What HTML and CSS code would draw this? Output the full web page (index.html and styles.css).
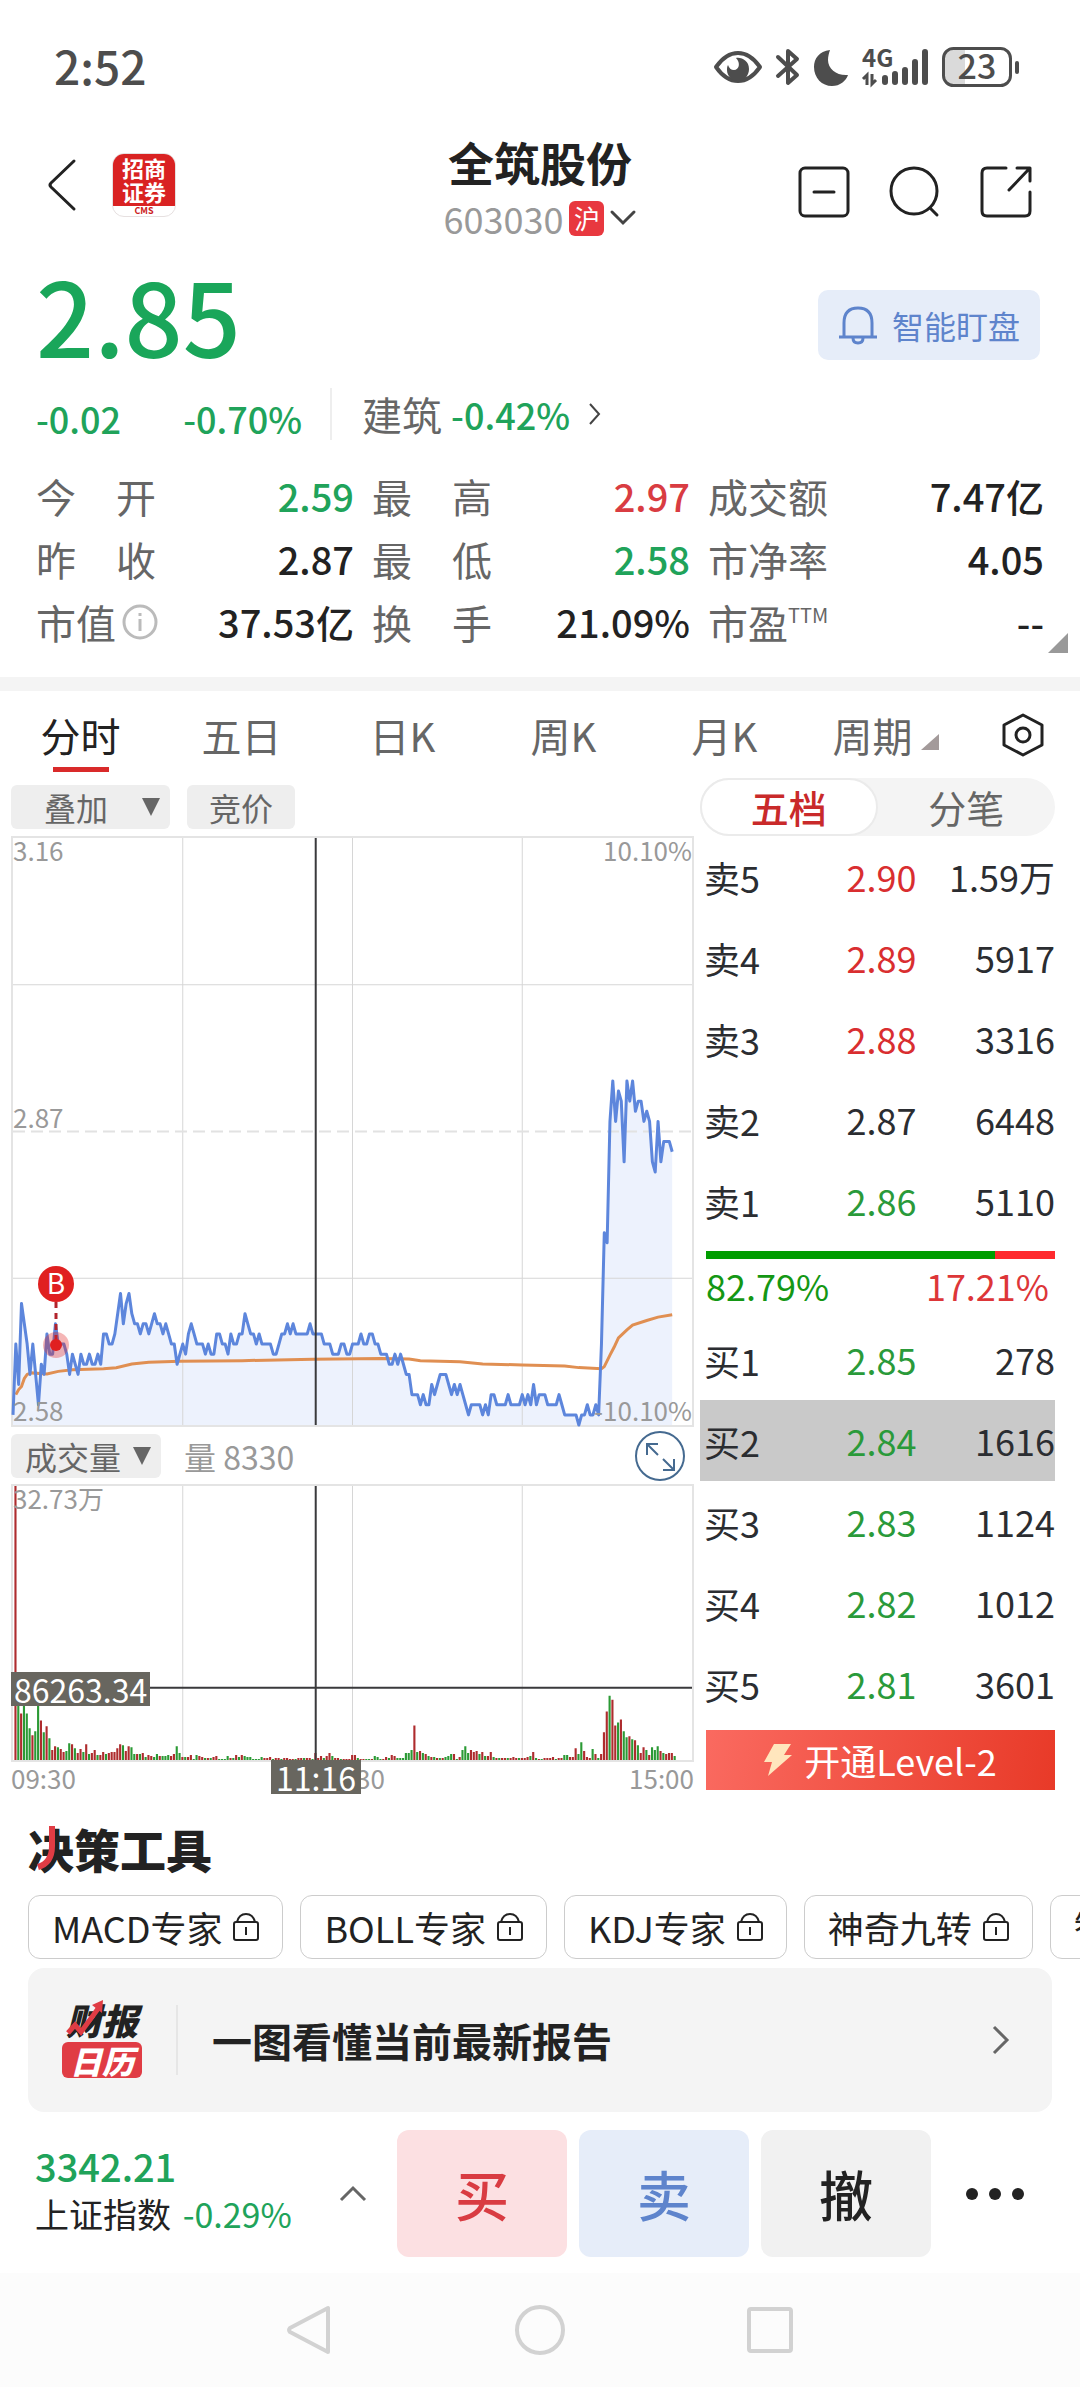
FILE: index.html
```html
<!DOCTYPE html>
<html lang="zh-CN">
<head>
<meta charset="utf-8">
<meta name="viewport" content="width=device-width, initial-scale=1">
<title>全筑股份 603030</title>
<link rel="stylesheet" href="styles.css">
</head>
<body>
<div class="statusbar">
  <span class="clock">2:52</span>
  <div class="status-icons">
    <svg width="48" height="34" viewBox="0 0 48 34"><path d="M2 17C9 7 16 3 24 3s15 4 22 14C39 27 32 31 24 31S9 27 2 17z" fill="none" stroke="#4d4d4d" stroke-width="4" stroke-linejoin="round"/><path d="M22 8c6-1 13 3 13 11 0 7-5 12-11 12s-11-5-11-11c0-2 0-3 1-5 1 3 3 5 6 5 5 0 7-7 2-12z" fill="#4d4d4d"/></svg>
    <svg class="bt" width="24" height="38" viewBox="0 0 24 38"><path d="M2 9l19 18-9 8V3l9 8L2 28" fill="none" stroke="#4d4d4d" stroke-width="4" stroke-linecap="round" stroke-linejoin="round"/></svg>
    <svg class="moon" width="34" height="37" viewBox="0 0 34 37"><path d="M16 1C5 2 0 10 0 18c0 11 8 19 18 19 8 0 14-5 16-11-11 1-20-6-20-15 0-4 1-7 2-10z" fill="#4d4d4d"/></svg>
    <svg class="signal" width="66" height="38" viewBox="0 0 66 38"><text x="0" y="19" class="net">4G</text><g stroke="#4d4d4d" stroke-width="3" fill="none"><path d="M5 37V27l-4 4M10 26v10l4-4"/></g><g stroke="#4d4d4d" stroke-width="6" stroke-linecap="round"><path d="M23 30v4M33 26v8M43 22v12M53 14v20M63 4v30"/></g></svg>
    <svg class="battery" width="78" height="40" viewBox="0 0 78 40"><path d="M12 3h11v34H12q-9 0-9-9V12q0-9 9-9z" fill="#dadada"/><rect x="1.5" y="1.5" width="67" height="37" rx="10" fill="none" stroke="#4d4d4d" stroke-width="3"/><path d="M75 16v9" stroke="#4d4d4d" stroke-width="4" stroke-linecap="round"/><text x="35" y="32" text-anchor="middle" class="pct">23</text></svg>
  </div>
</div>

<header class="topbar">
  <div class="top-left">
    <button class="icon-btn" aria-label="返回"><svg width="28" height="52" viewBox="0 0 28 52"><path d="M26 2L3 24q-2 2 0 4l23 22" fill="none" stroke="#222" stroke-width="3" stroke-linecap="round"/></svg></button>
    <div class="broker"><span class="broker-name">招商<br>证券</span><span class="broker-en">CMS</span></div>
  </div>
  <div class="top-mid">
    <h1>全筑股份</h1>
    <div class="code"><span>603030</span><span class="market">沪</span><svg width="26" height="16" viewBox="0 0 26 16"><path d="M2 2l11 11L24 2" fill="none" stroke="#444" stroke-width="3" stroke-linecap="round"/></svg></div>
  </div>
  <div class="top-right">
    <button class="icon-btn" aria-label="移除自选"><svg width="52" height="52" viewBox="0 0 52 52" fill="none" stroke="#222" stroke-width="3"><rect x="2" y="2" width="48" height="48" rx="5"/><path d="M16 26h20" stroke-linecap="round"/></svg></button>
    <button class="icon-btn" aria-label="搜索"><svg width="52" height="52" viewBox="0 0 52 52" fill="none" stroke="#222" stroke-width="3" stroke-linecap="round"><circle cx="25" cy="25" r="23"/><path d="M41 42l7 7"/></svg></button>
    <button class="icon-btn" aria-label="分享"><svg width="52" height="52" viewBox="0 0 52 52" fill="none" stroke="#222" stroke-width="3" stroke-linecap="round" stroke-linejoin="round"><path d="M26 2H7q-5 0-5 5v38q0 5 5 5h38q5 0 5-5V26M37 2h13v13M49 3L29 24"/></svg></button>
  </div>
</header>

<section class="quote">
  <div class="price-row">
    <strong class="price">2.85</strong>
    <button class="watch"><svg width="40" height="40" viewBox="0 0 40 40" fill="none" stroke="#5e84cc" stroke-width="3"><path d="M6 32V18Q6 3 20 3t14 15v14M1 32h38"/><path d="M15 33q0 5 5 5t5-5"/></svg>智能盯盘</button>
  </div>
  <div class="change-row">
    <div class="changes"><span>-0.02</span><span>-0.70%</span></div>
    <a class="sector" href="#sector">建筑 <b>-0.42%</b><svg width="14" height="24" viewBox="0 0 14 24"><path d="M2 2l9 10-9 10" fill="none" stroke="#444" stroke-width="2"/></svg></a>
  </div>
  <dl class="stats">
    <div><dt>今　开</dt><dd class="down">2.59</dd></div>
    <div><dt>最　高</dt><dd class="up">2.97</dd></div>
    <div><dt>成交额</dt><dd>7.47亿</dd></div>
    <div><dt>昨　收</dt><dd>2.87</dd></div>
    <div><dt>最　低</dt><dd class="down">2.58</dd></div>
    <div><dt>市净率</dt><dd>4.05</dd></div>
    <div><dt>市值<svg class="info" width="38" height="38" viewBox="0 0 38 38"><circle cx="19" cy="19" r="16" fill="none" stroke="#bbb" stroke-width="3"/><path d="M19 16v12M19 10v3" stroke="#bbb" stroke-width="3"/></svg></dt><dd>37.53亿</dd></div>
    <div><dt>换　手</dt><dd>21.09%</dd></div>
    <div><dt>市盈<sup>TTM</sup></dt><dd>--</dd></div>
  </dl>
  <svg class="corner" width="20" height="20" viewBox="0 0 20 20"><path d="M20 0v20H0z" fill="#999"/></svg>
</section>

<nav class="tabs">
  <button class="tab active">分时</button>
  <button class="tab">五日</button>
  <button class="tab">日K</button>
  <button class="tab">周K</button>
  <button class="tab">月K</button>
  <button class="tab">周期<svg width="18" height="16" viewBox="0 0 18 16"><path d="M18 0v16H0z" fill="#a39a9a"/></svg></button>
  <button class="tab tab-set" aria-label="设置"><svg width="42" height="44" viewBox="0 0 42 44" fill="none" stroke="#222" stroke-width="3" stroke-linejoin="round"><path d="M21 2l19 10v20L21 42 2 32V12z"/><circle cx="21" cy="22" r="7"/></svg></button>
</nav>

<main class="board">
  <div class="charts">
    <div class="chips">
      <button class="chip chip-overlay">叠加<i class="tri"></i></button>
      <button class="chip">竞价</button>
    </div>
    <div class="plot price-plot">
      <svg class="plot-svg" viewBox="0 0 240 58" preserveAspectRatio="none">
        <path id="area" class="area"/>
        <g class="grid"><path d="M60 0v58M120 0v58M180 0v58M0 14.5h240M0 43.5h240"/></g>
        <path class="mid" d="M0 29h240"/>
        <path id="avg" class="avg"/>
        <path id="line" class="line"/>
        <path class="cross" d="M107 0v58"/>
      </svg>
      <span class="lab top-l">3.16</span><span class="lab top-r">10.10%</span>
      <span class="lab mid-l">2.87</span>
      <span class="lab bot-l">2.58</span><span class="lab bot-r">-10.10%</span>
      <svg class="buy-mark" width="40" height="98" viewBox="0 0 40 98"><path d="M20 36v42" stroke="#b3242c" stroke-width="3" stroke-dasharray="6 5"/><circle cx="20" cy="79" r="13" fill="#e02020" opacity=".33"/><circle cx="20" cy="79" r="6" fill="#e02020"/><circle cx="20" cy="18" r="18" fill="#e02020"/><text x="20" y="28" text-anchor="middle" class="mark-b">B</text></svg>
    </div>
    <div class="vol-bar">
      <button class="chip">成交量<i class="tri"></i></button>
      <span class="vol-now">量 8330</span>
      <button class="icon-btn expand" aria-label="全屏"><svg width="50" height="50" viewBox="0 0 50 50" fill="none" stroke="#456a90" stroke-width="2"><circle cx="25" cy="25" r="24"/><path d="M23 24L12 13M12 24V13h11M28 28l11 11M39 28v11H28"/></svg></button>
    </div>
    <div class="plot vol-plot">
      <svg class="plot-svg" viewBox="0 0 240 277" preserveAspectRatio="none">
        <g class="grid"><path d="M60 0v277M120 0v277M180 0v277"/></g>
        <path id="vol-up" class="vol-up"/><path id="vol-down" class="vol-down"/>
        <path class="cross" d="M107 0v277M0 204h240"/>
      </svg>
      <span class="lab top-l">32.73万</span>
      <span class="tag tag-vol">86263.34</span>
    </div>
    <div class="axis"><span>09:30</span><span>11:30</span><span>15:00</span><span class="tag tag-time">11:16</span></div>
  </div>

  <div class="depth">
    <div class="segment"><button class="seg on">五档</button><button class="seg">分笔</button></div>
    <table class="book">
      <tr><th>卖5</th><td class="up">2.90</td><td>1.59万</td></tr>
      <tr><th>卖4</th><td class="up">2.89</td><td>5917</td></tr>
      <tr><th>卖3</th><td class="up">2.88</td><td>3316</td></tr>
      <tr><th>卖2</th><td>2.87</td><td>6448</td></tr>
      <tr><th>卖1</th><td class="down">2.86</td><td>5110</td></tr>
    </table>
    <div class="ratio">
      <div class="ratio-bar"><i style="width:82.79%"></i></div>
      <div class="ratio-text"><span class="g">82.79%</span><span class="r">17.21%</span></div>
    </div>
    <table class="book">
      <tr><th>买1</th><td class="down">2.85</td><td>278</td></tr>
      <tr class="picked"><th>买2</th><td class="down">2.84</td><td>1616</td></tr>
      <tr><th>买3</th><td class="down">2.83</td><td>1124</td></tr>
      <tr><th>买4</th><td class="down">2.82</td><td>1012</td></tr>
      <tr><th>买5</th><td class="down">2.81</td><td>3601</td></tr>
    </table>
    <button class="level2"><svg width="28" height="32" viewBox="0 0 28 32"><path d="M10 0h17l-7 11h8L4 32l4-14H0z" fill="#ffe6bd"/></svg>开通Level-2</button>
  </div>
</main>

<section class="tools">
  <h2>决策工具<svg class="stroke" width="18" height="44" viewBox="0 0 18 44"><path d="M15 0v20Q15 37 1 41" fill="none" stroke="#e03c44" stroke-width="6"/></svg></h2>
  <div class="tool-list">
    <button class="tool">MACD专家<svg class="lock" viewBox="0 0 26 30"><use href="#lock"/></svg></button>
    <button class="tool">BOLL专家<svg class="lock" viewBox="0 0 26 30"><use href="#lock"/></svg></button>
    <button class="tool">KDJ专家<svg class="lock" viewBox="0 0 26 30"><use href="#lock"/></svg></button>
    <button class="tool">神奇九转<svg class="lock" viewBox="0 0 26 30"><use href="#lock"/></svg></button>
    <button class="tool">智能选股<svg class="lock" viewBox="0 0 26 30"><use href="#lock"/></svg></button>
  </div>
  <a class="report" href="#report">
    <span class="report-logo"><span class="rl-top">财报</span><span class="rl-bot">日历</span><svg class="rl-arrow" width="44" height="36" viewBox="0 0 44 36"><path d="M4 33l7-8 6 7L36 6" fill="none" stroke="#e03c44" stroke-width="5"/><path d="M28 5L39 0l-1 13z" fill="#e03c44"/></svg></span>
    <span class="report-text">一图看懂当前最新报告</span>
    <svg width="18" height="30" viewBox="0 0 18 30"><path d="M2 2l13 13L2 28" fill="none" stroke="#666" stroke-width="3"/></svg>
  </a>
</section>

<footer class="trade">
  <div class="index">
    <div class="index-text"><strong>3342.21</strong><span class="index-name">上证指数 <em>-0.29%</em></span></div>
    <svg width="28" height="16" viewBox="0 0 28 16"><path d="M2 14L14 2l12 12" fill="none" stroke="#666" stroke-width="3"/></svg>
  </div>
  <button class="act buy">买</button>
  <button class="act sell">卖</button>
  <button class="act cancel">撤</button>
  <button class="icon-btn more" aria-label="更多"><svg width="60" height="14" viewBox="0 0 60 14"><g fill="#222"><circle cx="7" cy="7" r="6"/><circle cx="30" cy="7" r="6"/><circle cx="53" cy="7" r="6"/></g></svg></button>
</footer>

<div class="sysnav">
  <button class="icon-btn" aria-label="系统返回"><svg width="54" height="54" viewBox="0 0 54 54"><path d="M45 5v44L7 29q-2-2 0-4z" fill="none" stroke="#d2d2d2" stroke-width="4" stroke-linejoin="round"/></svg></button>
  <button class="icon-btn" aria-label="主屏幕"><svg width="54" height="54" viewBox="0 0 54 54"><circle cx="27" cy="27" r="23" fill="none" stroke="#d2d2d2" stroke-width="4"/></svg></button>
  <button class="icon-btn" aria-label="最近任务"><svg width="54" height="54" viewBox="0 0 54 54"><rect x="6" y="6" width="42" height="42" rx="2" fill="none" stroke="#d2d2d2" stroke-width="4"/></svg></button>
</div>

<svg class="defs" width="0" height="0"><symbol id="lock" viewBox="0 0 26 30"><g fill="none" stroke="#222" stroke-width="2"><rect x="1" y="10" width="24" height="18" rx="2"/><path d="M4 10q2-8 9-8t9 8M13 15v8"/></g></symbol></svg>
<script src="chart.js"></script>
</body>
</html>
```

FILE: chart.js
```js
// Price per minute, in cents above 2.58.
const price = [1,8,4,12,10,8,5,8,5,2,6,5,9,7,7,10,8,8,8,7,5,7,6,5,7,6,6,7,6,6,
  7,6,9,9,8,8,9,11,13,10,12,13,11,10,10,9,10,10,9,10,11,10,10,9,10,9,8,8,6,7,
  8,7,9,10,9,8,8,8,7,8,7,7,9,9,8,8,7,9,8,8,9,9,11,10,9,9,8,9,8,8,
  8,8,7,7,8,9,9,10,9,10,9,9,9,9,9,10,9,9,9,9,8,8,8,7,7,7,8,8,7,7,
  8,8,8,9,8,8,9,9,8,8,7,7,7,6,6,7,6,7,6,5,5,3,3,3,2,3,2,2,4,3,
  4,5,5,5,4,3,4,3,4,3,2,1,2,2,2,2,1,2,1,3,3,2,2,2,2,3,2,2,2,2,
  3,2,3,2,4,2,3,3,3,2,2,2,2,3,2,1,1,1,1,1,0,1,1,2,1,1,2,1,8,19,
  18,30,34,30,33,32,26,34,32,34,31,32,32,30,31,30,26,25,30,26,28,28,28,27];

const average = [[1,3],[2,3.5],[3,3.8],[4,4.6],[5,5],[6.5,5.15],[12,5.05],[16,5.3],
  [21,5.45],[32,5.55],[36.5,5.65],[42,6.03],[48,6.2],[59,6.3],[81,6.36],[106,6.5],
  [130,6.56],[140,6.52],[144,6.36],[158,6.26],[166,6.03],[180,5.93],[195,5.84],
  [200,5.67],[208,5.57],[209,5.77],[211,6.9],[212.5,7.7],[214,8.6],[217,9.4],
  [219,9.87],[224,10.33],[228,10.66],[233,10.9]];

// Volume per minute: positive for a rise, negative for a fall.
const volume = [277,-60,47,-66,-47,-32,25,-29,-60,40,-28,34,-22,10,14,-13,11,8,-9,-17,
  16,-12,7,11,-8,16,-6,7,10,-5,5,8,-6,7,8,8,12,16,-15,9,14,-13,-6,6,-6,7,-3,5,4,-3,
  -6,4,-4,-4,-5,4,6,-14,-7,3,-3,3,5,-1,-5,4,3,-2,2,-2,3,4,-1,-1,-1,-4,2,-2,5,-3,5,
  -4,-3,-3,-1,-1,-1,-3,2,2,3,-1,2,2,-1,2,2,1,1,-1,2,2,-2,2,2,-1,7,2,4,-2,4,7,-4,2,
  2,-1,1,1,1,5,5,-2,1,1,-1,-1,1,-4,-3,-1,1,3,-2,5,4,-2,-2,-2,-7,-7,-10,35,-8,9,-7,
  6,-4,3,-3,2,-2,2,-3,-4,-6,6,-1,3,-10,-14,-7,10,8,9,-6,8,-4,4,8,-3,2,-2,2,2,-2,2,
  3,2,-2,2,2,3,-4,8,-2,1,-1,2,2,2,3,-1,2,2,-5,-5,3,3,12,-6,-18,9,3,2,-11,6,-2,6,28,
  49,-65,61,35,-38,41,-29,-23,24,-21,20,-15,7,13,-10,5,-13,-10,-14,9,-7,6,7,7,-4];

const set = (id, d) => document.getElementById(id).setAttribute('d', d);
const points = list => list.map(([m, c]) => `${m} ${58 - c}`).join('L');
const line = points(price.map((c, m) => [m, c]));
set('line', 'M' + line);
set('area', `M0 58L${line}V58z`);
set('avg', 'M' + points(average));

const bars = keep => volume
  .map((v, i) => keep(v) ? `M${i + 0.5} 277v${-Math.abs(v)}h.75V277z` : '')
  .join('');
set('vol-up', bars(v => v > 0));
set('vol-down', bars(v => v < 0));
```

FILE: styles.css
```css
* { box-sizing: border-box; margin: 0; padding: 0; }
body {
  background: #fff;
  color: #222;
  font-family: "Noto Sans CJK SC", "Noto Sans", sans-serif;
  font-size: 40px;
  line-height: 1;
  overflow-x: hidden;
}
button { border: 0; background: none; font: inherit; color: inherit; white-space: nowrap; }
a { color: inherit; text-decoration: none; }
svg { display: block; flex: none; overflow: visible; }
.icon-btn { display: flex; align-items: center; justify-content: center; }
.defs { position: absolute; }
.up { color: #d93c42; }
.down { color: #20a35a; }

/* status bar */
.statusbar { display: flex; justify-content: space-between; align-items: center; height: 134px; padding: 0 60px 0 54px; color: #4d4d4d; }
.clock { padding-bottom: 4px; font-size: 46px; font-weight: 500; }
.status-icons { display: flex; align-items: center; }
.bt { margin-left: 14px; }
.moon { margin-left: 14px; }
.signal { margin-left: 14px; }
.battery { margin-left: 14px; }
.net { font-size: 24px; font-weight: 700; fill: #4d4d4d; }
.pct { font-size: 34px; font-weight: 500; fill: #4d4d4d; }

/* title bar */
.topbar { display: grid; grid-template-columns: 1fr auto 1fr; height: 116px; padding: 0 48px; }
.top-left { display: flex; align-items: center; gap: 36px; height: 102px; }
.broker { display: flex; flex-direction: column; width: 64px; height: 64px; border-radius: 12px; overflow: hidden; border: 1px solid #e6e0e0; background: #fff; text-align: center; }
.broker-name { height: 52px; padding-top: 1px; background: #d92222; color: #fff; font-size: 22px; font-weight: 700; line-height: 24px; }
.broker-en { color: #c22; font-size: 9px; font-weight: 700; line-height: 10px; }
.top-mid { display: flex; flex-direction: column; align-items: center; }
h1 { font-size: 46px; line-height: 54px; font-weight: 700; }
.code { display: flex; align-items: center; gap: 6px; height: 60px; font-size: 36px; color: #999; }
.market { width: 35px; height: 35px; border-radius: 6px; background: #e8383f; color: #fff; font-size: 26px; line-height: 34px; text-align: center; }
.top-right { display: flex; justify-content: flex-end; align-items: center; gap: 39px; height: 116px; }

/* quote */
.quote { position: relative; padding: 0 36px 24px; border-bottom: 14px solid #f4f4f4; }
.price-row { display: flex; justify-content: space-between; align-items: center; height: 136px; }
.price { padding-bottom: 8px; font-size: 102px; font-weight: 500; color: #1aa65a; }
.watch { display: flex; align-items: center; gap: 14px; height: 70px; padding: 0 20px; margin: 14px 4px 0 0; border-radius: 10px; background: #e6edf9; color: #5e84cc; font-size: 32px; }
.change-row { display: flex; align-items: center; height: 56px; }
.changes { display: flex; gap: 62px; padding: 8px 28px 0 0; color: #20a35a; font-size: 36px; font-weight: 500; }
.sector { display: flex; align-items: center; height: 52px; padding-left: 30px; border-left: 2px solid #eee; color: #666; white-space: pre; }
.sector b { font-size: 36px; font-weight: 500; color: #20a35a; margin-right: 18px; }
.stats { display: grid; grid-template-columns: 318fr 318fr 336fr; column-gap: 18px; grid-auto-rows: 63px; margin-top: 22px; }
.stats > div { display: flex; justify-content: space-between; align-items: center; white-space: nowrap; }
.stats dt { display: flex; color: #666; }
.stats dd { font-size: 38px; font-weight: 500; }
.stats sup { font-size: 20px; line-height: 26px; }
.info { margin: 1px 0 0 5px; }
.corner { position: absolute; right: 12px; bottom: 24px; }

/* period tabs */
.tabs { display: grid; grid-template-columns: repeat(6, 161fr) 114fr; height: 87px; color: #666; }
.tab { position: relative; display: flex; align-items: center; justify-content: center; gap: 8px; }
.tab svg { margin-top: 14px; }
.tab-set svg { margin-top: 0; }
.tab.active { color: #222; }
.tab.active::after { content: ""; position: absolute; bottom: 6px; width: 56px; height: 5px; background: #d92a2a; }

/* charts */
.board { display: grid; grid-template-columns: 683fr 355fr; gap: 6px; padding: 0 25px 0 11px; }
.chips { display: flex; gap: 17px; padding: 7px 0; }
.chip { display: flex; align-items: center; gap: 12px; height: 44px; padding: 0 22px; border-radius: 6px; background: #eee; color: #666; font-size: 32px; }
.chip-overlay { gap: 34px; padding: 0 10px 0 33px; }
.tri { width: 0; height: 0; border: 9px solid transparent; border-top: 18px solid #666; border-bottom: 0; }
.plot { position: relative; border: 2px solid #e4e4e4; }
.price-plot { height: 591px; }
.vol-plot { height: 278px; }
.plot-svg { width: 100%; height: 100%; overflow: visible; }
.plot-svg path { vector-effect: non-scaling-stroke; fill: none; }
.grid { stroke: #d6d6d6; stroke-width: 1px; }
.plot-svg .area { fill: #edf2fd; }
.mid { stroke: #e2e2e2; stroke-width: 2px; stroke-dasharray: 12 6; }
.avg { stroke: #e08f52; stroke-width: 3px; }
.line { stroke: #5d86dc; stroke-width: 3px; stroke-linejoin: round; }
.cross { stroke: #3a3a3c; stroke-width: 2px; }
.plot-svg .vol-up { fill: #ae2c2e; }
.plot-svg .vol-down { fill: #2b9a35; }
.lab { position: absolute; font-size: 26px; line-height: 24px; color: #999; }
.top-l { left: 0; top: 0; }
.top-r { right: 0; top: 0; }
.mid-l { left: 0; top: 267px; }
.bot-l { left: 0; bottom: 3px; }
.bot-r { right: 0; bottom: 3px; }
.buy-mark { position: absolute; left: 23px; top: 428px; }
.mark-b { font-size: 28px; fill: #fff; }
.vol-bar { display: flex; align-items: center; height: 57px; }
.vol-bar .chip { padding: 0 10px 0 14px; }
.vol-now { margin-left: 23px; font-size: 32px; color: #999; }
.expand { margin: 0 9px 0 auto; }
.tag { position: absolute; background: #68665f; color: #fff; font-size: 32px; line-height: 34px; }
.tag-vol { left: -2px; top: 186px; padding: 0 3px; }
.tag-time { left: 260px; top: -2px; padding: 0 5px; }
.axis { position: relative; display: flex; justify-content: space-between; padding-top: 2px; font-size: 26px; line-height: 28px; color: #999; }

/* order book */
.segment { display: grid; grid-template-columns: 1fr 1fr; height: 58px; border-radius: 29px; background: #f4f4f4; color: #666; font-size: 38px; }
.seg { border-radius: 29px; line-height: 52px; }
.seg.on { background: #fff; border: 2px solid #ebebeb; color: #c92a2a; font-weight: 500; }
.book { width: 100%; border-collapse: collapse; table-layout: fixed; font-size: 36px; color: #2b2d31; }
.book tr { height: 81px; }
.book th { width: 33%; padding-left: 4px; font-weight: 400; text-align: left; }
.book td { padding-bottom: 2px; text-align: right; }
.book td:nth-child(2) { width: 28%; }
.book .up { color: #d92e30; }
.book .down { color: #2a9a3a; }
.picked { background: #c9c9c9; }
.ratio { height: 78px; padding: 10px 0 0 6px; }
.ratio-bar { height: 8px; background: #ff2a2e; }
.ratio-bar i { display: block; height: 8px; background: #009d00; }
.ratio-text { display: flex; justify-content: space-between; padding: 8px 6px 0 0; font-size: 36px; }
.g { color: #149714; }
.r { color: #dd3638; }
.level2 { display: flex; align-items: center; justify-content: center; gap: 12px; width: calc(100% - 6px); height: 60px; margin: 6px 0 0 6px; background: linear-gradient(100deg, #fa6a60, #e83a28); color: #fff; font-size: 36px; }

/* tools */
.tools { padding: 27px 28px 18px; }
h2 { position: relative; font-size: 46px; line-height: 58px; font-weight: 900; }
.stroke { position: absolute; left: 9px; top: 7px; }
.tool-list { display: flex; gap: 17px; margin: 18px -28px 9px 0; overflow: hidden; }
.tool { display: flex; align-items: center; gap: 11px; flex: none; height: 64px; padding: 0 23px; border: 1px solid #ccc; border-radius: 12px; font-size: 36px; }
.lock { width: 26px; height: 30px; }
.report { display: flex; align-items: center; height: 144px; padding: 0 42px 0 34px; border-radius: 16px; background: #f4f4f4; }
.report-logo { position: relative; width: 80px; font-weight: 900; font-style: italic; text-align: center; }
.rl-top { display: block; font-size: 36px; line-height: 34px; }
.rl-bot { display: block; margin-top: 6px; border-radius: 6px; background: #e03c44; color: #fff; font-size: 32px; line-height: 36px; }
.rl-arrow { position: absolute; left: 2px; top: -2px; }
.report-text { flex: 1; margin-left: 34px; padding-left: 34px; border-left: 2px solid #e6e6e6; line-height: 70px; font-weight: 700; }

/* trading bar */
.trade { display: grid; grid-template-columns: 361fr 170fr 170fr 170fr 104fr; column-gap: 12px; height: 143px; padding: 0 33px 16px 24px; }
.index { display: flex; align-items: center; justify-content: space-between; padding: 0 18px 0 11px; }
.index-text { padding-bottom: 8px; }
.index strong { display: block; color: #20a35a; font-size: 38px; line-height: 48px; font-weight: 500; }
.index-name { display: block; font-size: 34px; line-height: 48px; white-space: nowrap; }
.index em { margin-left: 4px; font-style: normal; color: #20a35a; }
.act { border-radius: 12px; font-size: 54px; font-weight: 500; }
.buy { background: #fce0e2; color: #d93c42; }
.sell { background: #e6edf9; color: #5e84cc; }
.cancel { background: #f1f1f1; color: #222; }

.sysnav { display: flex; justify-content: center; gap: 176px; height: 114px; padding-top: 30px; background: #fcfcfc; }
.sysnav .icon-btn { height: 54px; }
```
